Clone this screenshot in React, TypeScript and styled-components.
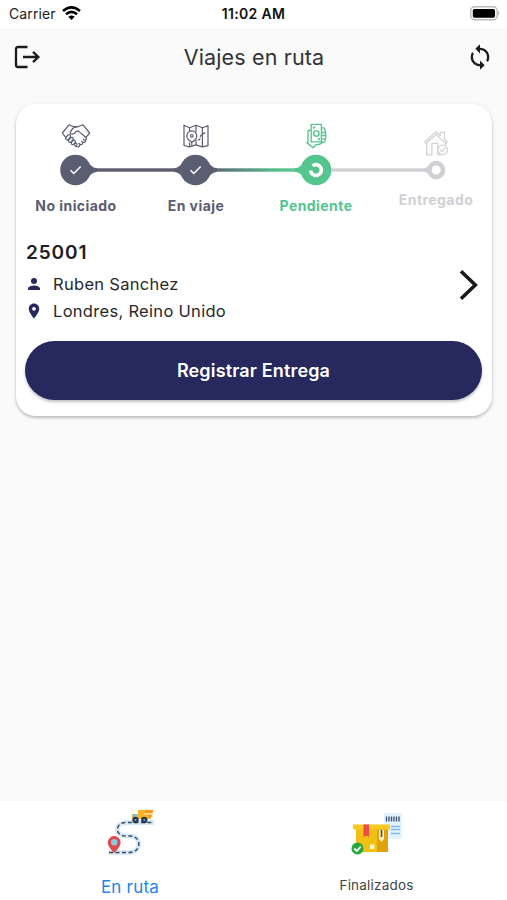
import React from "react";
import styled, { createGlobalStyle } from "styled-components";

const GlobalStyle = createGlobalStyle`
  * { box-sizing: border-box; }
  body { margin: 0; background: #fafafa; font-family: Inter, "Liberation Sans", sans-serif; }
  svg { display: block; flex: none; overflow: visible; }
`;

const Screen = styled.div`
  width: 507px;
  height: 900px;
  display: flex;
  flex-direction: column;
  overflow: hidden;
  background: #fafafa;
  color: #202022;
`;

const StatusBar = styled.div`
  height: 28px;
  flex: none;
  display: grid;
  grid-template-columns: 1fr auto 1fr;
  align-items: center;
  padding: 0 7px 2px 9px;
  background: #fff;
  font-size: 14px;
`;

const Carrier = styled.div`
  display: flex;
  align-items: center;
  gap: 6px;
  letter-spacing: 0.1px;
`;

const Clock = styled.div`
  font-size: 14px;
  font-weight: 600;
  letter-spacing: 0.35px;
  margin-left: -2px;
  color: #111;
`;

const BatterySlot = styled.div`
  display: flex;
  justify-content: flex-end;
`;

const AppBar = styled.header`
  height: 60px;
  flex: none;
  display: grid;
  grid-template-columns: 1fr auto 1fr;
  align-items: center;
  padding: 0 13px 2px 14px;
`;

const Title = styled.h1`
  margin: 0;
  font-size: 21.5px;
  font-weight: 400;
  letter-spacing: 0.15px;
  color: #333335;
`;

const IconButton = styled.button<{ $end?: boolean }>`
  display: flex;
  padding: 0;
  border: 0;
  background: none;
  justify-self: ${(p) => (p.$end ? "end" : "start")};
`;

const Main = styled.main`
  flex: 1;
  padding: 16px 15px 0 16px;
`;

const Card = styled.section`
  height: 312px;
  display: flex;
  flex-direction: column;
  border-radius: 20px;
  background: #fff;
  box-shadow: 0 2px 3px rgba(0, 0, 0, 0.2), 0 1px 5px rgba(0, 0, 0, 0.08);
`;

const Stepper = styled.div`
  display: grid;
  grid-template-columns: repeat(4, 120px);
  height: 136px;
  padding-top: 18px;
`;

const StepCell = styled.div<{ $color: string; $compact?: boolean }>`
  display: flex;
  flex-direction: column;
  align-items: center;
  color: ${(p) => p.$color};
  padding-top: ${(p) => (p.$compact ? 7 : 0)}px;
`;

const StepTrack = styled.div<{ $compact?: boolean }>`
  height: 32px;
  margin-top: ${(p) => (p.$compact ? -4 : 3)}px;
`;

const StepLabel = styled.span<{ $compact?: boolean }>`
  margin-top: ${(p) => (p.$compact ? 5 : 11)}px;
  font-size: 14px;
  line-height: 18px;
  font-weight: 700;
  letter-spacing: 0.44px;
  white-space: nowrap;
`;

const TripRow = styled.div`
  display: flex;
  align-items: center;
  justify-content: space-between;
  padding: 0 13px 0 9px;
`;

const TripNumber = styled.h2`
  margin: 0 0 4px 1px;
  font-size: 19px;
  line-height: 26px;
  font-weight: 600;
  letter-spacing: 0.9px;
`;

const Detail = styled.div`
  display: flex;
  align-items: center;
  gap: 10px;
  height: 27px;
  font-size: 16.5px;
  letter-spacing: 0.3px;
  color: #29292b;
`;

const ArrowSlot = styled.div`
  padding-top: 6px;
`;

const SubmitButton = styled.button`
  height: 59px;
  margin: 17px 10px 0 9px;
  padding: 0 6px;
  border: 0;
  border-radius: 30px;
  background: #27285e;
  color: #fff;
  font: 600 18px Inter, sans-serif;
  letter-spacing: 0.15px;
  box-shadow: 0 2px 3px rgba(0, 0, 0, 0.25);
`;

const TabBar = styled.nav`
  height: 99px;
  flex: none;
  display: grid;
  grid-template-columns: 260px 233px;
  background: #fff;
  box-shadow: 0 0 4px rgba(0, 0, 0, 0.015);
`;

const Tab = styled.a<{ $active?: boolean }>`
  display: flex;
  flex-direction: column;
  align-items: center;
  padding-top: 6px;
  gap: ${(p) => (p.$active ? 20 : 18)}px;
  font-size: ${(p) => (p.$active ? 17 : 13.5)}px;
  line-height: 20px;
  letter-spacing: 0.2px;
  color: ${(p) => (p.$active ? "#2385e8" : "#444446")};
`;

const DARK = "#5b5d70";
const GREEN = "#54c58f";
const GREY = "#d0d1d4";

const Wifi = () => (
  <svg width="19" height="15" viewBox="0 0 19 15" fill="none" stroke="#000" strokeWidth="2.5">
    <path d="M1 5Q9.5-2.2 18 5M4 8.2q5.5-4.6 11 0" />
    <path d="m6.3 10.8 3.2 3.2 3.2-3.2q-3.2-2.4-6.4 0Z" fill="#000" stroke="none" />
  </svg>
);

const Battery = () => (
  <svg width="30" height="15" viewBox="0 0 30 15">
    <rect x=".7" y=".8" width="26.5" height="13" rx="4" fill="#fff" stroke="#bbb" strokeWidth="1.4" />
    <rect x="2.8" y="3" width="22.2" height="8.7" rx="1.6" fill="#000" />
    <path d="M28.2 5v4.4q2-2.2 0-4.4Z" fill="#aaa" />
  </svg>
);

const Logout = () => (
  <svg width="27" height="24" viewBox="0 0 27 24" fill="none" stroke="#1c1c1e" strokeWidth="2.3">
    <path d="M13.5 2H4Q2 2 2 4v16q0 2 2 2h9.5M9 12h15M19 6.8l5.4 5.2-5.4 5.2" />
  </svg>
);

const Sync = () => (
  <svg width="28" height="28" viewBox="0 0 24 24" fill="#1c1c1e">
    <path d="M12 4V1L8 5l4 4V6c3.31 0 6 2.69 6 6 0 1.01-.25 1.97-.7 2.8l1.46 1.46A7.93 7.93 0 0 0 20 12c0-4.42-3.58-8-8-8Zm0 14c-3.31 0-6-2.69-6-6 0-1.01.25-1.97.7-2.8L5.24 7.74A7.93 7.93 0 0 0 4 12c0 4.42 3.58 8 8 8v3l4-4-4-4v3Z" />
  </svg>
);

const iconProps = {
  fill: "none",
  stroke: "currentColor",
  strokeWidth: 1.2,
  strokeLinejoin: "round" as const,
  strokeLinecap: "round" as const,
};

const Handshake = () => (
  <svg width="30" height="29" viewBox="0 0 30 29" {...iconProps}>
    <path d="M8 2.8 1.3 11l3.6 4.6M8 2.8l4.6 1.9h3.9L22 2.8l6.7 8.2-3.8 4.4" />
    <path d="M16.5 4.7q-4 .2-5.6 2.9l-1.6 2.6q-.2 2 1.9 2 2.6-.2 3.8-2.8 2-.8 3.6.7l6.1 5.2q1.5 1.5.1 2.6-1.2.7-2.5-.4M24.4 18q.4 2-1 2.4-1.3.3-2.7-1.1M21.6 20.4q.3 1.9-1.1 2.2-1.2.3-2.6-1.1M18.8 22.5q.1 2-1.8 2.5-1.5-.1-3.4-1.9" />
    <path d="M5.2 15.2 7 13.1q1.4-1 2.3.1.8 1-.2 2.2l-1.8 2.1q-1.4 1-2.3-.1-.8-1 .2-2.2ZM7.7 18l2-2.3q1.4-.9 2.3.2.7 1-.2 2.1l-1.7 2q-1.4 1-2.3-.1-.8-1-.1-1.9ZM10.5 20.2l1.5-1.6q1.3-.8 2.1.2.7 1-.2 2l-1.2 1.4q-1.3.9-2.1 0-.8-1-.1-2ZM13 22.4l1-1q1.2-.5 1.8.3.5.8-.2 1.7l-.8.9" />
  </svg>
);

const RouteMap = () => (
  <svg width="30" height="29" viewBox="0 0 30 29" {...iconProps}>
    <path d="m3 3.2 5.6 2.5L15 3.2l6.4 2.5 5.6-2v20l-5.6 1.2-6.4-2-6.4 2L3 23.5ZM8.6 5.7v3M8.6 21v3.9M15 3.2v6.6M15 18v4.9M21.4 5.7v19.2" />
    <path d="M10.8 8.9a5 5 0 0 1 5 5c0 3.2-5 6.3-5 6.3s-5-3.1-5-6.3a5 5 0 0 1 5-5ZM10.8 20v3.2" />
    <circle cx="10.8" cy="13.8" r="1.3" />
    <path d="M17.2 18q2-.4 2-2.7 0-2.5 4.8-4.5" strokeDasharray="2 2" />
  </svg>
);

const CashHand = () => (
  <svg width="30" height="29" viewBox="0 0 30 29" {...iconProps} strokeWidth={1.35}>
    <path d="M10.2 2.4h10.2v17.4H10.2ZM10.2 8.5H7v10.8l-1 1.6 6.1 4.9 3-3.1q5.4-.4 6-2.5h1.8q1.7-1.2 1.3-3.4 1.2-1.5.2-2.8 1.1-1.5 0-3 .8-1.6-.4-2.9l-1-2.2h-2.6M20.4 10.5h3.5M20.4 13.5h3.8M20.4 16.8h3.5" />
    <circle cx="15.4" cy="11.5" r="2.7" />
    <path d="M12.7 5.5h.7M17.6 17h.6" strokeWidth="1.9" />
  </svg>
);

const HouseCheck = () => (
  <svg width="30" height="29" viewBox="0 0 30 29" {...iconProps}>
    <path d="m3.8 12.8 11.2-10 4.2 3.7V3.3h4.2v6.8l2.9 2.7-1.4 1.5L15 5.5l-9.8 8.8ZM5.7 14.1v11.7h5.2V14.4h5.8v11.4h3M24.6 13.8v2.3" />
    <circle cx="21.7" cy="20.8" r="4.8" />
    <path d="m19.2 20.8 1.8 1.9 3.2-3.9" />
  </svg>
);

const DoneNode = ({ index }: { index: 0 | 1 }) => (
  <svg width="120" height="32" viewBox="0 0 120 32">
    <defs>
      <linearGradient id="leaveActive" gradientUnits="userSpaceOnUse" x1="68" y1="0" x2="146" y2="0">
        <stop stopColor={DARK} />
        <stop offset="1" stopColor={GREEN} />
      </linearGradient>
    </defs>
    {index === 1 && <rect y="14.3" width="48" height="3.4" fill="#625a6e" />}
    <rect x="72" y="14.3" width="48" height="3.4" fill={index === 1 ? "url(#leaveActive)" : "#625a6e"} />
    <circle cx="59.5" cy="16" r="15.3" fill={DARK} />
    <path d="M70 4.5q4 9 11 9.8v3.4q-7 .8-11 9.8Z" fill={DARK} />
    {index === 1 && <path d="M49 4.5q-4 9-11 9.8v3.4q7 .8 11 9.8Z" fill={DARK} />}
    <path d="m54.5 16.3 3.3 3.2 6.8-7" fill="none" stroke="#fff" strokeWidth="1.5" />
  </svg>
);

const ActiveNode = () => (
  <svg width="120" height="32" viewBox="0 0 120 32">
    <defs>
      <linearGradient id="reachActive" gradientUnits="userSpaceOnUse" x1="-52" y1="0" x2="26" y2="0">
        <stop stopColor={DARK} />
        <stop offset="1" stopColor={GREEN} />
      </linearGradient>
    </defs>
    <rect y="14.3" width="48" height="3.4" fill="url(#reachActive)" />
    <rect x="72" y="14.3" width="48" height="3.4" fill={GREY} />
    <circle cx="60" cy="16" r="15.3" fill={GREEN} />
    <path d="M50 4.5q-4 9-11 9.8v3.4q7 .8 11 9.8Z" fill={GREEN} />
    <path d="M56.6 11.8a5.4 5.4 0 1 1-2 4.8" fill="none" stroke="#fff" strokeWidth="3.7" />
  </svg>
);

const PendingNode = () => (
  <svg width="120" height="32" viewBox="0 0 120 32">
    <rect y="14.3" width="52" height="3.4" fill={GREY} />
    <path d="M52 12.7 48 14.3v3.4l4 1.6Z" fill={GREY} />
    <circle cx="60.2" cy="16" r="6.8" fill="#fff" stroke="#ced0d3" strokeWidth="4.7" />
  </svg>
);

const steps = [
  { label: "No iniciado", color: DARK, icon: <Handshake />, node: <DoneNode index={0} /> },
  { label: "En viaje", color: DARK, icon: <RouteMap />, node: <DoneNode index={1} /> },
  { label: "Pendiente", color: GREEN, icon: <CashHand />, node: <ActiveNode /> },
  { label: "Entregado", color: GREY, icon: <HouseCheck />, node: <PendingNode />, compact: true },
];

const Person = () => (
  <svg width="18" height="18" viewBox="0 0 24 24" fill="#27285e">
    <path d="M12 12a4 4 0 1 0 0-8 4 4 0 0 0 0 8Zm0 2c-2.67 0-8 1.34-8 4v2h16v-2c0-2.66-5.33-4-8-4Z" />
  </svg>
);

const Place = () => (
  <svg width="18" height="18" viewBox="0 0 24 24" fill="#27285e">
    <path d="M12 2C8.13 2 5 5.13 5 9c0 5.25 7 13 7 13s7-7.75 7-13c0-3.87-3.13-7-7-7Zm0 9.5a2.5 2.5 0 1 1 0-5 2.5 2.5 0 0 1 0 5Z" />
  </svg>
);

const Chevron = () => (
  <svg width="20" height="32" viewBox="0 0 20 32" fill="none" stroke="#1b1b1d" strokeWidth="3.6">
    <path d="m2 2.2 14.3 13.8L2 29.8" />
  </svg>
);

const TruckRoute = () => (
  <svg width="50" height="50" viewBox="0 0 50 50" fill="none">
    <path d="M4 45.5h20c13 0 13-16.5 1-16.5h-4c-12 0-11-13.5 0-13.5h28" stroke="#d9e8f5" strokeWidth="4.8" />
    <path d="M4 45.5h20c13 0 13-16.5 1-16.5h-4c-12 0-11-13.5 0-13.5h28" stroke="#344b67" strokeWidth="1.4" strokeDasharray="4 2.5" />
    <path d="M27 7h6V3h15l-2 4 2-1-2 6H27Z" fill="#f8b526" />
    <path d="M28 7h4v3h-5Z" fill="#87bed4" />
    <path d="M39 7h8M43 3v4" stroke="#f7f1dc" />
    <path d="M40 3h9l-2 3h-7M42 8h5l-3 3" fill="#ff941f" />
    <circle cx="30.5" cy="13" r="3.2" fill="#26384f" />
    <circle cx="39.3" cy="13" r="3.2" fill="#26384f" />
    <circle cx="30.5" cy="13" r="1" fill="#8ca5b8" />
    <circle cx="39.3" cy="13" r="1" fill="#8ca5b8" />
    <path d="M2.8 35.5a6.4 6.4 0 0 1 12.8 0C15.6 40 9.2 46 9.2 46S2.8 40 2.8 35.5Z" fill="#e2474b" />
    <circle cx="9.2" cy="35.2" r="3.3" fill="#89c8dd" />
  </svg>
);

const PackageDone = () => (
  <svg width="54" height="50" viewBox="0 0 54 50" fill="none">
    <path d="M34 6h18v26H34Z" fill="#e4f2fd" />
    <path d="M36.5 9.5v5M39 9.5v5M41.5 9.5v5M44 9.5v5M46.5 9.5v5M49 9.5v5" stroke="#425676" strokeWidth="1.4" />
    <path d="M41 19.5h9M41 22.5h9M41 26.5h9" stroke="#7abdf4" strokeWidth="1.7" />
    <path d="M6 18h32v27H6Z" fill="#f4bf13" />
    <path d="M27 20h11v25H27Z" fill="#dfa40d" />
    <path d="M3 17.5h37v5H3Z" fill="#f9ca20" />
    <path d="M13.5 17.5H19V30l-2.8-1.5-2.7 1.5Z" fill="#ed4a4a" />
    <path d="M29 23h5v9l-2.5 3-2.5-3Z" fill="#fff0bf" />
    <path d="M31.5 23v7" stroke="#514d40" strokeWidth="1.6" />
    <path d="M20 37.5h4.5V42H20Z" fill="#fff4cc" />
    <circle cx="7.5" cy="41.5" r="6" fill="#28a83b" />
    <path d="m4.3 41.5 2.5 2.5 4-4.3" stroke="#fff" strokeWidth="1.8" />
  </svg>
);

export default function App() {
  return (
    <>
      <GlobalStyle />
      <Screen>
        <StatusBar>
          <Carrier>Carrier <Wifi /></Carrier>
          <Clock>11:02 AM</Clock>
          <BatterySlot><Battery /></BatterySlot>
        </StatusBar>
        <AppBar>
          <IconButton aria-label="Salir"><Logout /></IconButton>
          <Title>Viajes en ruta</Title>
          <IconButton $end aria-label="Actualizar"><Sync /></IconButton>
        </AppBar>
        <Main>
          <Card>
            <Stepper>
              {steps.map((step) => (
                <StepCell key={step.label} $color={step.color} $compact={step.compact}>
                  {step.icon}
                  <StepTrack $compact={step.compact}>{step.node}</StepTrack>
                  <StepLabel $compact={step.compact}>{step.label}</StepLabel>
                </StepCell>
              ))}
            </Stepper>
            <TripRow>
              <div>
                <TripNumber>25001</TripNumber>
                <Detail><Person />Ruben Sanchez</Detail>
                <Detail><Place />Londres, Reino Unido</Detail>
              </div>
              <ArrowSlot><Chevron /></ArrowSlot>
            </TripRow>
            <SubmitButton>Registrar Entrega</SubmitButton>
          </Card>
        </Main>
        <TabBar>
          <Tab $active><TruckRoute />En ruta</Tab>
          <Tab><PackageDone />Finalizados</Tab>
        </TabBar>
      </Screen>
    </>
  );
}
